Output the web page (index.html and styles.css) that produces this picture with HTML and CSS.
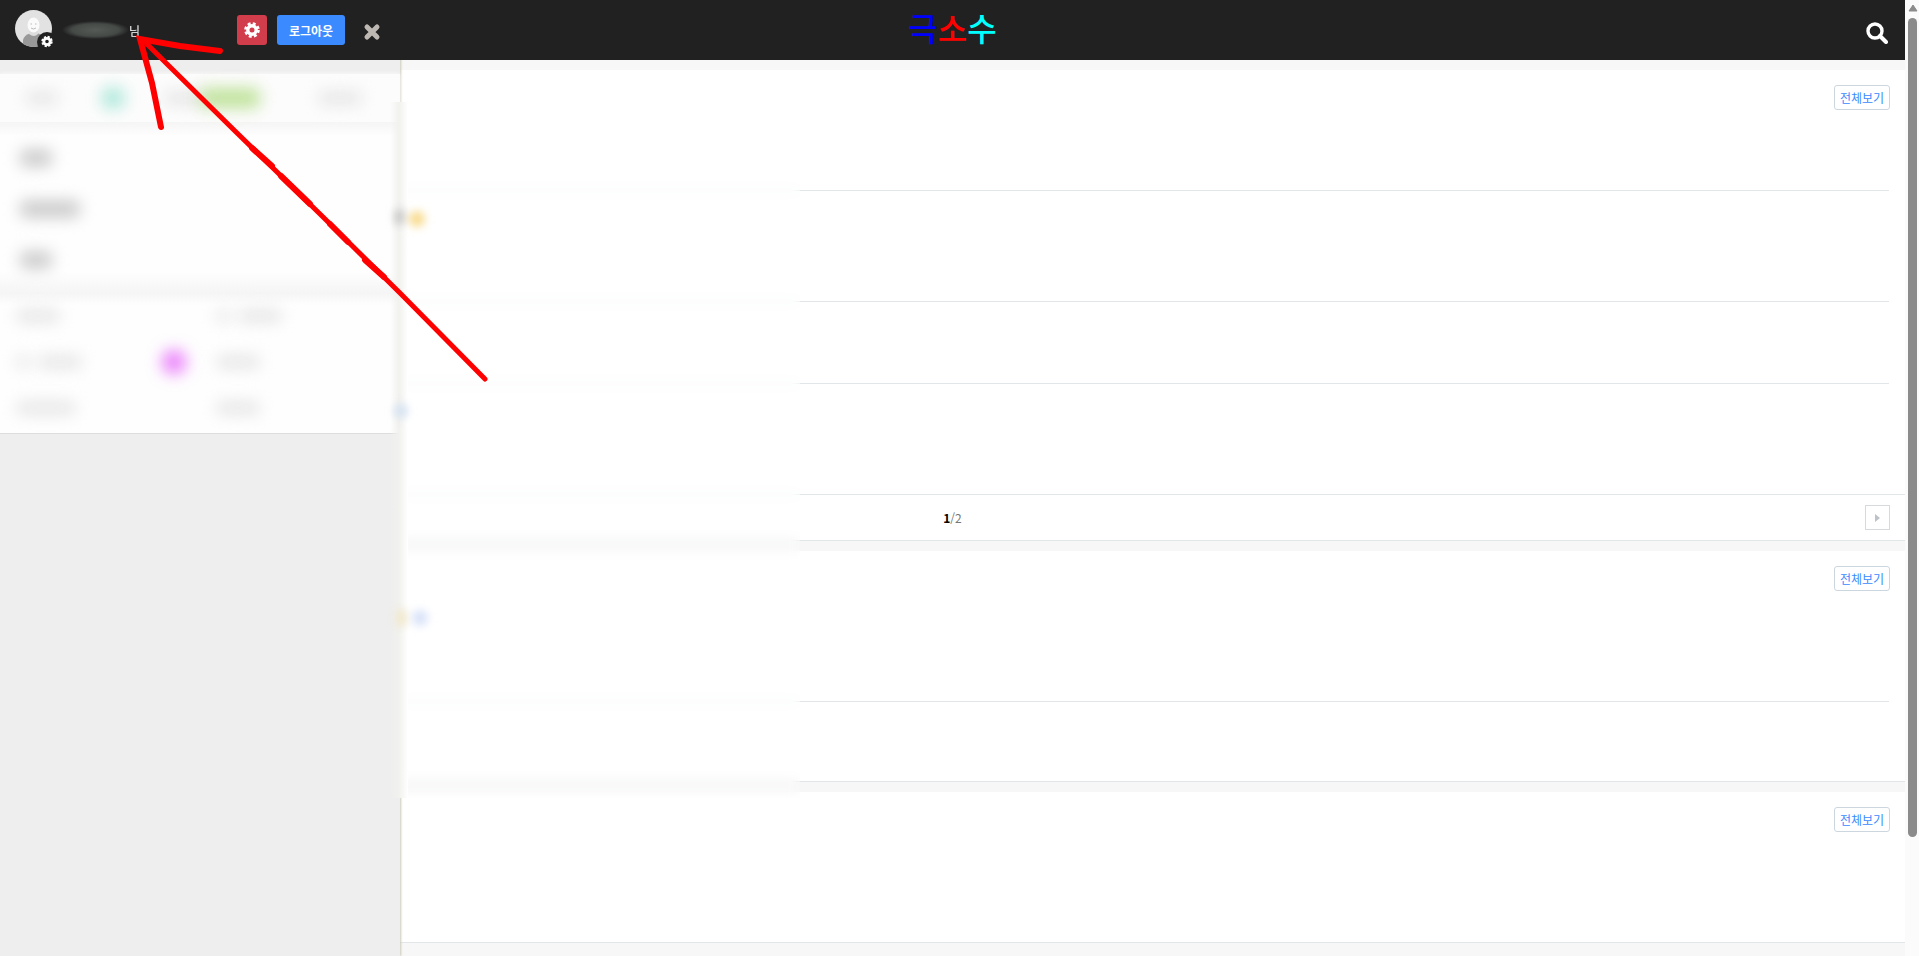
FILE: index.html
```html
<!DOCTYPE html>
<html lang="ko">
<head>
<meta charset="utf-8">
<title>극소수</title>
<link rel="stylesheet" href="styles.css">
</head>
<body>
<div class="app">
  <div class="page">
    <header class="topbar">
      <h1 class="logo"><span class="logo-blue">극</span><span class="logo-red">소</span><span class="logo-cyan">수</span></h1>
      <button class="search" type="button" aria-label="검색">
        <svg viewBox="0 0 22 22" width="22" height="22"><circle cx="9" cy="9" r="7" fill="none" stroke="#fff" stroke-width="3.4"/><path d="M14 14l6 6" stroke="#fff" stroke-width="4" stroke-linecap="round"/></svg>
      </button>
    </header>
    <main class="feed">
      <section class="card">
        <button class="all" type="button">전체보기</button>
        <ul class="list">
          <li class="item item-first"></li>
          <li class="item item-tall"></li>
          <li class="item item-short"></li>
          <li class="item item-tall item-last"></li>
        </ul>
        <nav class="pager">
          <p class="count"><b>1</b>/2</p>
          <button class="next" type="button" aria-label="다음"><svg viewBox="0 0 5 8" width="5" height="8"><path d="M0 0l5 4-5 4z" fill="#bcc2c8"/></svg></button>
        </nav>
      </section>
      <section class="card">
        <button class="all" type="button">전체보기</button>
        <ul class="list">
          <li class="item item-lead"></li>
          <li class="item item-end"></li>
        </ul>
      </section>
      <section class="card card-small">
        <button class="all" type="button">전체보기</button>
      </section>
    </main>
    <div class="haze"></div>

    <aside class="drawer">
      <div class="profile">
        <span class="avatar">
          <svg viewBox="0 0 40 40" width="40" height="40">
            <defs><clipPath id="face"><circle cx="18.500" cy="18.500" r="18.500"/></clipPath></defs>
            <g clip-path="url(#face)"><rect width="40" height="40" fill="#e2e2e2"/><path d="M8 40V30q1-5 8-7h6q7 2 8 7v10z" fill="#999"/><path d="M14 20h9v4q-4 4-9 0z" fill="#ddd"/><ellipse cx="18.500" cy="15" rx="6" ry="7.500" fill="#fafafa"/><path d="M15.500 14h1.500M20 14h1.500M16 18q2.500 2 5 0" stroke="#bbb" fill="none"/></g>
            <circle cx="32" cy="32" r="10" fill="#212121"/>
            <g transform="translate(32 31.500)"><circle r="3.200" fill="none" stroke="#fff" stroke-width="2.800"/><circle r="4.700" fill="none" stroke="#fff" stroke-width="2" stroke-dasharray="2.200 1.491"/></g>
          </svg>
        </span>
        <p class="name"><span class="masked"></span>님</p>
        <button class="settings" type="button" aria-label="설정"><svg viewBox="-8 -8 16 16" width="16" height="16"><circle r="4.200" fill="none" stroke="#fff" stroke-width="3.400"/><circle r="6.500" fill="none" stroke="#fff" stroke-width="2.600" stroke-dasharray="2.900 2.205"/></svg></button>
        <button class="logout" type="button">로그아웃</button>
        <button class="close" type="button" aria-label="닫기"><svg viewBox="0 0 18 18" width="18" height="18"><path d="M4 4l10 10M14 4L4 14" stroke="#bdb8b2" stroke-width="5" stroke-linecap="round"/></svg></button>
      </div>
      <div class="tabs">
        <i class="smudge w-short"></i><i class="smudge w-dot teal"></i><i class="smudge w-mid pale"></i><i class="smudge w-long green"></i><i class="smudge w-mid"></i>
      </div>
      <div class="menu">
        <div class="menu-row"><i class="smudge w-short dark"></i></div>
        <div class="menu-row"><i class="smudge w-long dark"></i></div>
        <div class="menu-row"><i class="smudge w-short dark"></i></div>
      </div>
      <div class="links">
        <div class="link"><i class="smudge w-mid"></i></div>
        <div class="link"><i class="smudge w-dot"></i><i class="smudge w-mid"></i></div>
        <div class="link"><i class="smudge w-dot"></i><i class="smudge w-mid"></i><i class="smudge w-dot pink"></i></div>
        <div class="link"><i class="smudge w-mid"></i></div>
        <div class="link"><i class="smudge w-long"></i></div>
        <div class="link"><i class="smudge w-mid"></i></div>
      </div>
    </aside>
    <div class="edge"></div>
    <svg class="marks" viewBox="0 0 500 640" width="500" height="640">
      <defs><filter id="soft" x="-100%" y="-100%" width="300%" height="300%"><feGaussianBlur stdDeviation="4"/></filter></defs>
      <g filter="url(#soft)">
        <rect x="395" y="210" width="9" height="14" fill="#c4c4c4"/>
        <circle cx="417" cy="219" r="8" fill="#f8dc90"/>
        <circle cx="401" cy="411" r="7" fill="#d4e1f2"/>
        <rect x="397" y="610" width="9" height="16" fill="#f1e6c6"/>
        <circle cx="420" cy="618" r="8" fill="#d8e2f8"/>
      </g>
      <g stroke="#f00" stroke-width="6" stroke-linecap="round" fill="none"><path d="M220 51L180 46L140 39L152 83L161 127"/><path d="M144 41L166 63L236 132L320 214L400 293L485 379" stroke-width="5"/><path d="M252 148L272 166M281 176L310 204M330 224L348 242M365 260L384 277"/></g>
    </svg>
  </div>
  <div class="scrollbar" aria-hidden="true">
    <svg viewBox="0 0 10 8" width="10" height="8"><path d="M5 1l4 6H1z" fill="#8b8b8b" stroke="#8b8b8b" stroke-linejoin="round"/></svg>
    <span class="thumb"></span>
  </div>
</div>
</body>
</html>
```
FILE: styles.css
```css
* { box-sizing: border-box; }
body {
  margin: 0;
  font-family: "Noto Sans CJK KR", sans-serif;
  font-size: 12px;
  background: #f7f7f7;
}
button {
  padding: 0;
  border: 0;
  background: none;
  font: inherit;
  display: flex;
  align-items: center;
  justify-content: center;
}
p, ul, h1 { margin: 0; padding: 0; }
ul { list-style: none; }

.app { display: flex; height: 100vh; overflow: hidden; }
.page { position: relative; flex: 1; min-width: 0; overflow: hidden; }

.topbar {
  display: grid;
  grid-template-columns: 1fr auto 1fr;
  align-items: center;
  height: 60px;
  padding: 0 17px;
  background: #212121;
}
.logo {
  grid-column: 2;
  display: flex;
  padding-bottom: 6px;
  font-size: 32px;
  line-height: 54px;
  font-weight: 500;
}
.logo-blue { color: #00f; }
.logo-red { color: #f00; }
.logo-cyan { color: #0ff; }
.search { justify-self: end; padding-top: 6px; }

.feed { display: flex; flex-direction: column; gap: 10px; padding-top: 10px; }
.card { position: relative; background: #fff; border-bottom: 1px solid #e1e7e8; }
.card-small { height: 151px; }
.all {
  position: absolute;
  top: 15px;
  right: 15px;
  width: 56px;
  height: 25px;
  border: 1px solid #ccd6df;
  border-radius: 3px;
  color: #3b8aff;
}
.item { margin: 0 16px; border-bottom: 1px solid #e1e7e8; }
.item-first { height: 121px; }
.item-tall { height: 111px; }
.item-short { height: 82px; }
.item-last { margin: 0; }
.item-lead { height: 151px; }
.item-end { height: 79px; border: 0; }
.pager {
  display: grid;
  grid-template-columns: 1fr auto 1fr;
  align-items: center;
  padding: 10px 15px;
}
.count { grid-column: 2; color: #777; }
.count b { color: #000; }
.next { justify-self: end; width: 25px; height: 25px; border: 1px solid #d6dadd; }

.haze {
  position: absolute;
  top: 102px;
  left: 400px;
  width: 400px;
  height: 696px;
  backdrop-filter: blur(6px);
}

.drawer {
  position: absolute;
  top: 0;
  left: 0;
  display: flex;
  flex-direction: column;
  width: 400px;
  height: 100%;
  background: #eee;
  box-shadow: 1px 0 2px #c9c9b8;
}
.profile {
  display: flex;
  align-items: center;
  height: 60px;
  padding: 0 19px 0 15px;
  background: #212121;
  box-shadow: 4px 0 #212121;
  color: #fff;
}
.avatar { height: 40px; }
.avatar svg { display: block; }
.name { display: flex; align-items: center; flex: 1; padding-left: 7px; }
.masked {
  width: 67px;
  height: 18px;
  background: radial-gradient(closest-side, #565a57, #454a47 70%, #212121);
}
.settings { width: 30px; height: 30px; border-radius: 3px; background: #d13d4b; }
.logout {
  width: 68px;
  height: 30px;
  margin: 0 18px 0 10px;
  border-radius: 3px;
  background: #3b8aff;
  color: #fff;
  font-weight: 700;
}
.close { padding-top: 4px; }

.tabs {
  display: flex;
  align-items: center;
  height: 48px;
  margin-top: 14px;
  padding: 0 38px 0 26px;
  background: #fcfcfc;
  box-shadow: 0 0 4px #fcfcfc;
}
.tabs .teal { margin-left: 44px; }
.tabs .pale { margin-left: 40px; }
.tabs .green { margin-left: -8px; }
.tabs .w-mid:last-child { margin-left: auto; }
.menu { padding: 10px 0 8px; background: linear-gradient(#f5f5f5, #fefefe 14px, #fefefe 150px, #f5f5f5); }
.menu-row { display: flex; align-items: center; height: 51px; padding-left: 20px; }
.links {
  display: grid;
  grid-template-columns: 1fr 1fr;
  grid-auto-rows: 46px;
  padding-bottom: 2px;
  border-bottom: 1px solid #ddd;
  background: linear-gradient(#f5f5f5, #fefefe 12px);
}
.link { display: flex; align-items: center; gap: 8px; padding: 0 14px 0 16px; }
.smudge { flex: none; height: 12px; border-radius: 6px; background: #e3e3e3; filter: blur(8px); }
.w-dot { width: 14px; }
.w-short { width: 32px; }
.w-mid { width: 44px; }
.w-long { width: 60px; }
.dark { height: 16px; background: #c6c6c6; }
.teal { width: 22px; height: 20px; background: #a9e7d8; }
.green { height: 20px; background: #bfe29a; }
.pink { width: 24px; height: 24px; margin-left: auto; border-radius: 12px; background: #e97bfa; }

.edge {
  position: absolute;
  top: 102px;
  left: 390px;
  width: 18px;
  height: 696px;
  background: linear-gradient(90deg, #f4f4f100, #f1f1ee 50%, #fff);
}
.marks { position: absolute; top: 0; left: 0; }

.scrollbar {
  display: flex;
  flex-direction: column;
  align-items: center;
  gap: 6px;
  width: 14px;
  padding: 4px 0 0 1px;
  background: #fbfbfb;
}
.thumb { width: 9px; height: 86%; border-radius: 5px; background: #8b8b8b; }
```
